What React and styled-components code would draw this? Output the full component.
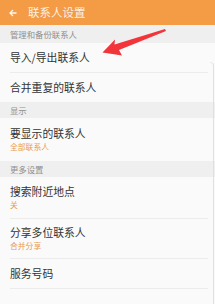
import React from "react";
import styled, { createGlobalStyle } from "styled-components";

const Global = createGlobalStyle`
  html, body { margin: 0; padding: 0; background: #fafafa; }
  body { font-family: "Noto Sans CJK SC", "Noto Sans", sans-serif; }
  * { box-sizing: border-box; }
`;

const Page = styled.div`
  position: relative;
  width: 215px;
  height: 304px;
  overflow: hidden;
  background: #fafafa;
`;

const Header = styled.div`
  height: 25px;
  background: #f39b45;
  display: flex;
  align-items: center;
  padding-left: 9px;
  gap: 11px;
  color: rgba(255, 255, 255, 0.88);
`;

const Title = styled.div`
  font-size: 11.5px;
  line-height: 1;
`;

const Section = styled.div`
  height: ${(p) => p.$h}px;
  background: #efefef;
  display: flex;
  align-items: center;
  padding-left: 10px;
  font-size: 8.4px;
  color: #8f8f8f;
`;

const Row = styled.div`
  height: ${(p) => p.$h}px;
  margin: 0 7px 0 10px;
  display: flex;
  flex-direction: column;
  justify-content: center;
  border-bottom: ${(p) => (p.$line ? "1px solid #ececec" : "none")};
`;

const Main = styled.div`
  font-size: 10.8px;
  color: #333;
  line-height: 1.25;
`;

const Sub = styled.div`
  font-size: 7.8px;
  color: #e89a55;
  line-height: 1.3;
  margin-top: 1px;
`;

const EdgeLine = styled.div`
  position: absolute;
  right: 1px;
  top: 62px;
  bottom: 0;
  width: 4px;
  border-top-right-radius: 4px;
  border-right: 1px solid #e0e0e0;
  border-top: 1px solid #ebebeb;
`;

const Arrow = styled.svg`
  position: absolute;
  left: 0;
  top: 0;
  pointer-events: none;
`;

export default function App() {
  return (
    <Page>
      <Global />
      <Header>
        <svg width="8" height="8" viewBox="0 0 8 8">
          <path d="M7.5 4H1.2M4 1L1 4l3 3" fill="none" stroke="rgba(255,255,255,0.9)" strokeWidth="1.3" />
        </svg>
        <Title>联系人设置</Title>
      </Header>
      <Section $h={18}>管理和备份联系人</Section>
      <Row $h={30} $line>
        <Main>导入/导出联系人</Main>
      </Row>
      <Row $h={29}>
        <Main>合并重复的联系人</Main>
      </Row>
      <Section $h={16}>显示</Section>
      <Row $h={43}>
        <Main>要显示的联系人</Main>
        <Sub>全部联系人</Sub>
      </Row>
      <Section $h={16}>更多设置</Section>
      <Row $h={42} $line>
        <Main>搜索附近地点</Main>
        <Sub>关</Sub>
      </Row>
      <Row $h={40} $line>
        <Main>分享多位联系人</Main>
        <Sub>合并分享</Sub>
      </Row>
      <Row $h={30} $line>
        <Main>服务号码</Main>
      </Row>
      <EdgeLine />
      <Arrow width="215" height="304" viewBox="0 0 215 304">
        <polygon
          points="102.5,52.5 115,39.5 114.5,44.5 165,29 166,31 119,50 122,55.5"
          fill="#f2353a"
        />
      </Arrow>
    </Page>
  );
}
